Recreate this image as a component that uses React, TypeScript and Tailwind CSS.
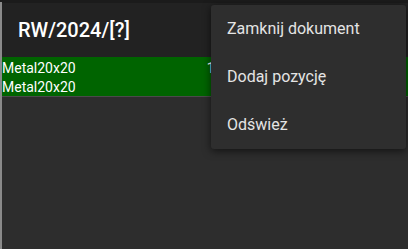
import React from "react";

export default function App() {
  return (
    <div className="relative w-[408px] h-[249px] overflow-hidden bg-[#1b1b1b]" style={{ fontFamily: "Roboto, 'Noto Sans', sans-serif" }}>
      <div className="absolute left-0 top-[2px] w-[2px] bottom-0 bg-[#8a8a8a]" />
      <div className="mt-[3px] ml-[2px] h-[246px] flex flex-col bg-[#2d2d2d]">
        <div className="h-[54px] bg-[#222222] flex items-center pl-[16px]">
          <span className="text-[20px] font-medium text-white leading-none">RW/2024/[?]</span>
        </div>
        <div className="bg-[#006400] border-b border-[#4a4a4a] pt-[1px]">
          <div className="flex h-[19px] items-center text-[14px] text-white leading-none">
            <span>Metal20x20</span>
            <span className="ml-[131px]">1</span>
          </div>
          <div className="flex h-[19px] items-center text-[14px] text-white leading-none">
            <span>Metal20x20</span>
          </div>
        </div>
      </div>
      <div className="absolute left-[211px] top-[5px] w-[195px] bg-[#2e2e2e] rounded-[3px] shadow-[0_2px_8px_rgba(0,0,0,0.6)] flex flex-col">
        <div className="h-[48px] flex items-center pl-[16px] text-[16px] text-[#e4e4e4]">Zamknij dokument</div>
        <div className="h-[48px] flex items-center pl-[16px] text-[16px] text-[#e4e4e4]">Dodaj pozycję</div>
        <div className="h-[48px] flex items-center pl-[16px] text-[16px] text-[#e4e4e4]">Odśwież</div>
      </div>
    </div>
  );
}
